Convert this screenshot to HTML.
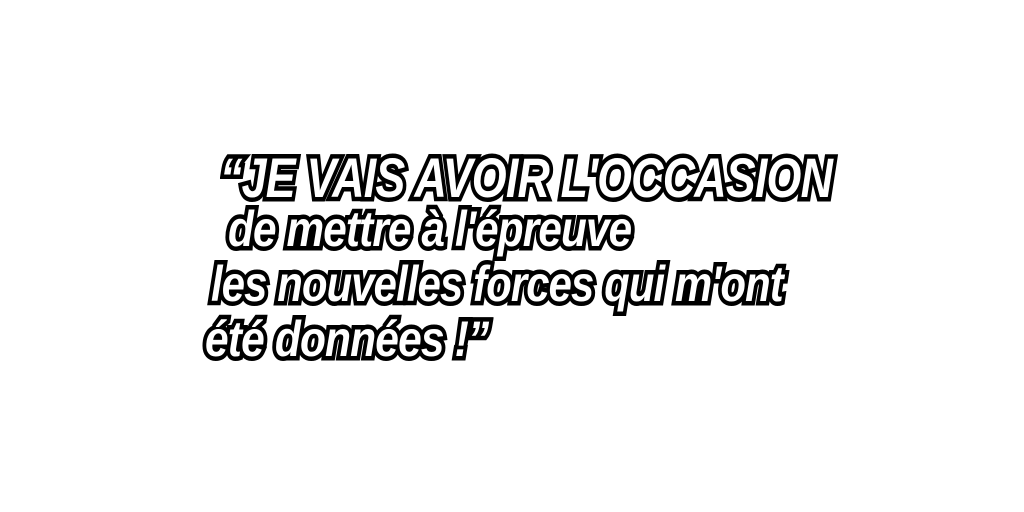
<!DOCTYPE html>
<html><head><meta charset="utf-8"><style>
html,body{margin:0;padding:0;background:#fff;width:1024px;height:512px;overflow:hidden}
.l{position:absolute;white-space:nowrap;font-family:"Liberation Sans Narrow","Liberation Sans",sans-serif;font-weight:bold;font-style:italic;color:#fff;-webkit-text-stroke:9px #000;paint-order:stroke fill;transform-origin:0 0;letter-spacing:-1px}
</style></head><body>
<div class="l" style="left:220px;top:145px;font-size:56px;transform:scaleX(0.80)">“JE VAIS AVOIR L'OCCASION</div>
<div class="l" style="left:228px;top:200px;font-size:50px;transform:scaleX(0.845)">de mettre à l'épreuve</div>
<div class="l" style="left:211px;top:255px;font-size:50px;transform:scaleX(0.835)">les nouvelles forces qui m'ont</div>
<div class="l" style="left:205px;top:310px;font-size:50px;transform:scaleX(0.85)">été données !”</div>
</body></html>
